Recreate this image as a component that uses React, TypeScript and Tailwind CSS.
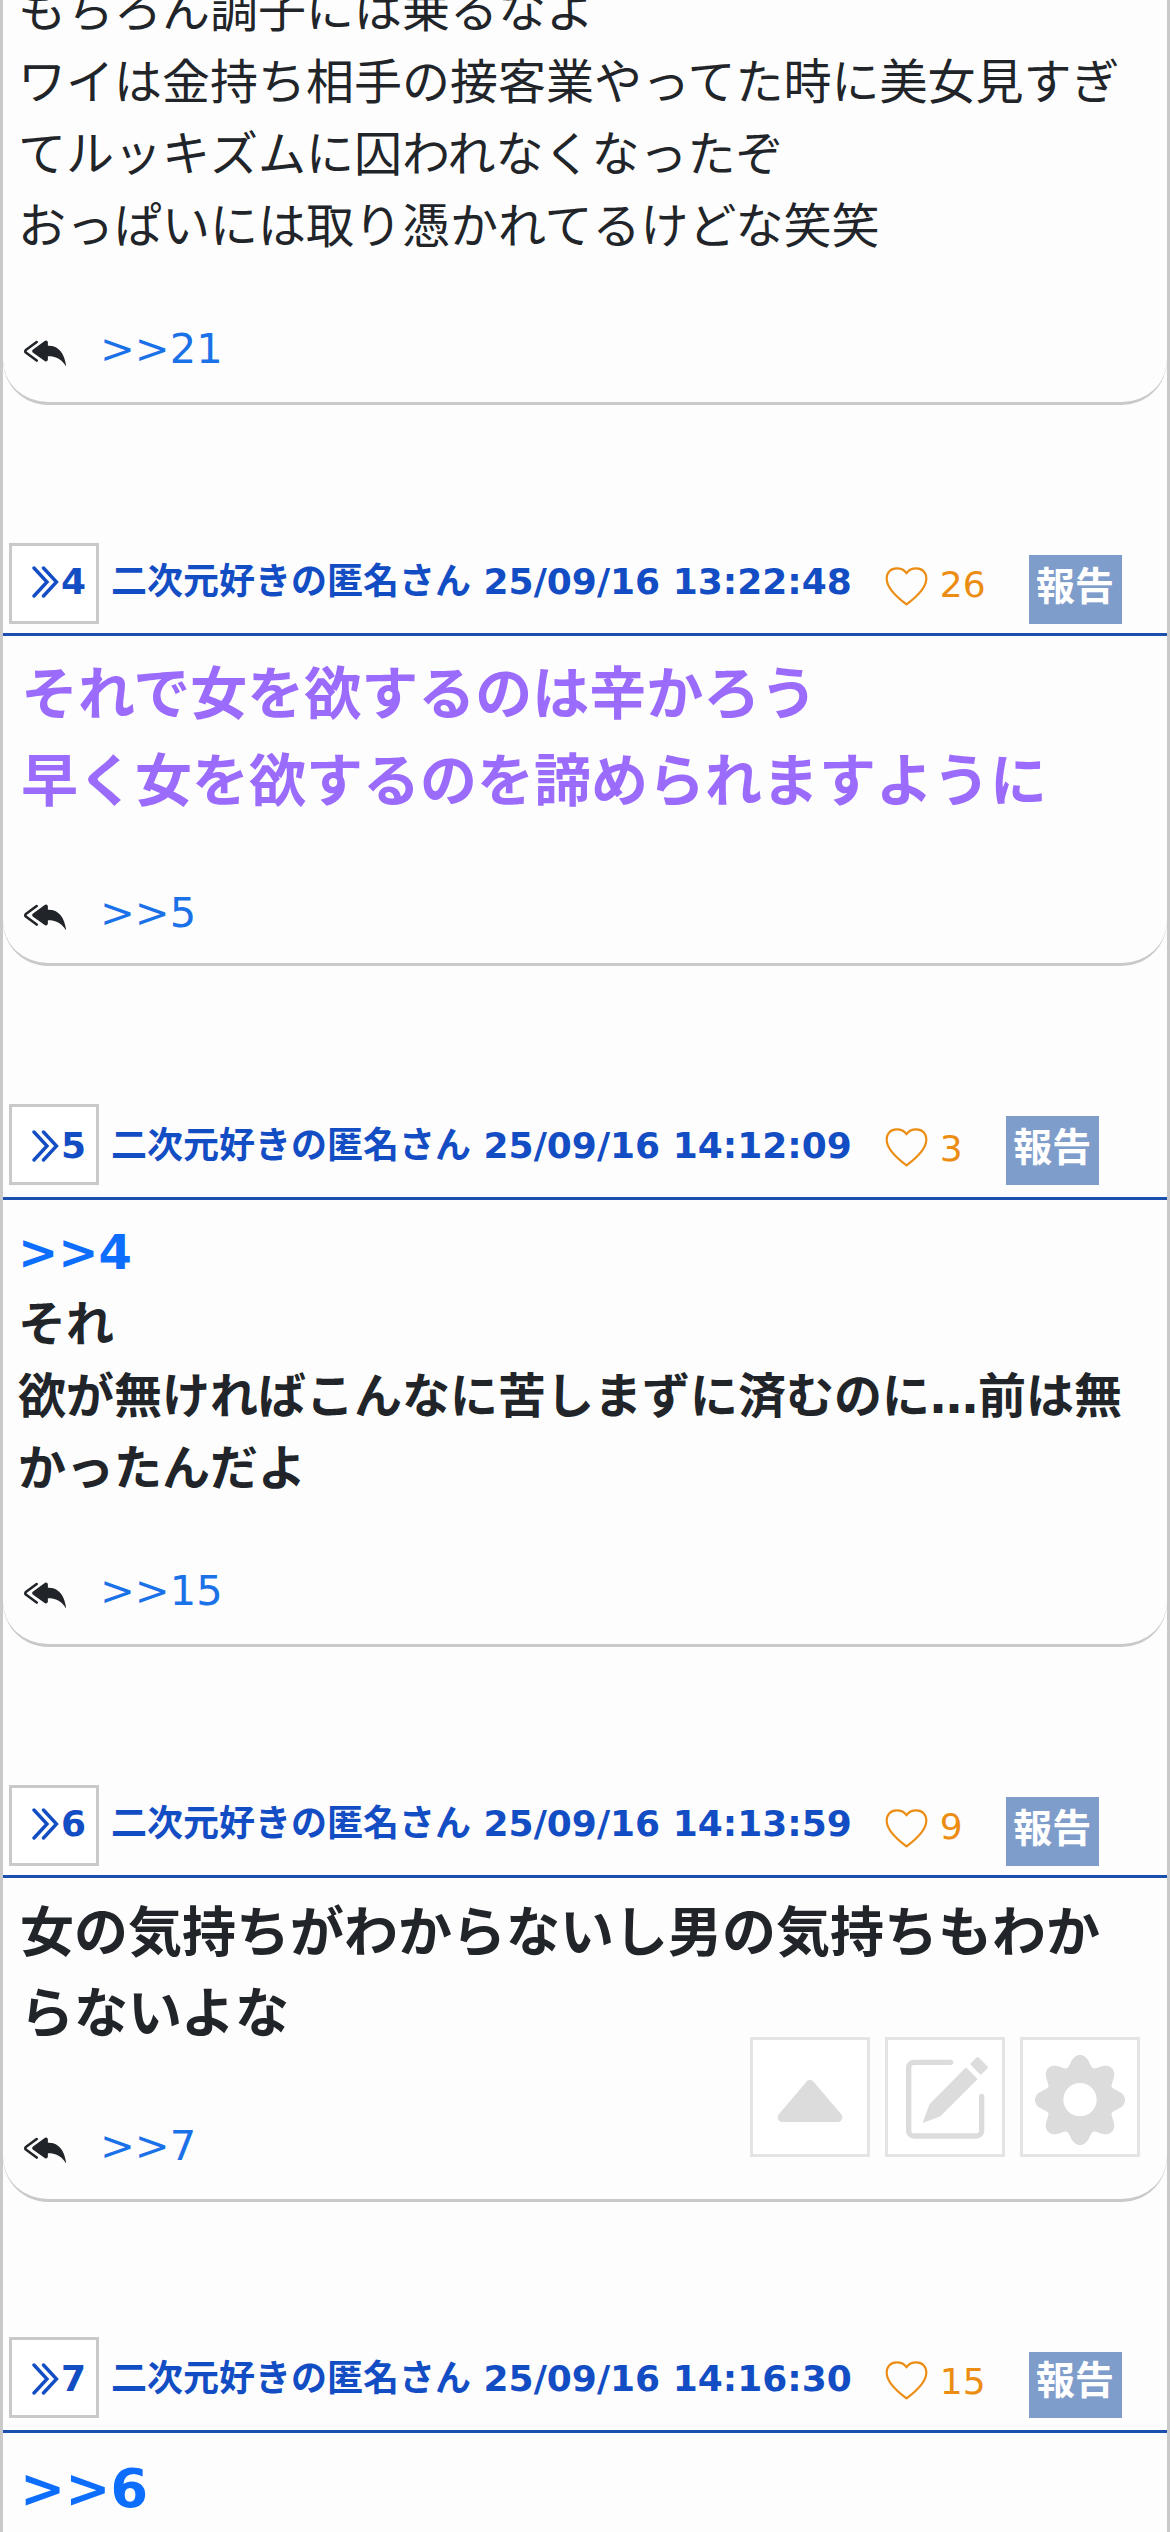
import type { ReactNode } from "react";
import { BsReplyAllFill } from "react-icons/bs";

type Post = {
  no: number;
  time: string;
  likes: number;
  headClass: string;
  badgeClass: string;
  bodyClass: string;
  textClass: string;
  replyClass: string;
  reply: string;
  text: ReactNode;
};

const posts: Post[] = [
  {
    no: 4,
    time: "25/09/16 13:22:48",
    likes: 26,
    headClass: "h-[231px] pb-[9px]",
    badgeClass: "h-[69px]",
    bodyClass: "h-[330px]",
    textClass: "pt-[15px] pl-[18px] text-[57px] leading-[87px] font-bold text-[#9b6bfb]",
    replyClass: "pb-[19px]",
    reply: ">>5",
    text: (
      <>
        それで女を欲するのは辛かろう
        <br />
        早く女を欲するのを諦められますように
      </>
    ),
  },
  {
    no: 5,
    time: "25/09/16 14:12:09",
    likes: 3,
    headClass: "h-[234px] pb-[12px]",
    badgeClass: "h-[69px]",
    bodyClass: "h-[447px]",
    textClass: "pt-[16px] pl-[15px] text-[48px] leading-[72px] font-bold",
    replyClass: "pb-[22px]",
    reply: ">>15",
    text: (
      <>
        <a className="text-[#0d6efd]">{">>4"}</a>
        <br />
        それ
        <br />
        欲が無ければこんなに苦しまずに済むのに…前は無
        <br />
        かったんだよ
      </>
    ),
  },
  {
    no: 6,
    time: "25/09/16 14:13:59",
    likes: 9,
    headClass: "h-[231px] pb-[9px]",
    badgeClass: "h-[69px]",
    bodyClass: "h-[324px]",
    textClass: "pt-[15px] pl-[17px] text-[54px] leading-[81px] font-bold",
    replyClass: "pb-[22px]",
    reply: ">>7",
    text: (
      <>
        女の気持ちがわからないし男の気持ちもわか
        <br />
        らないよな
      </>
    ),
  },
  {
    no: 7,
    time: "25/09/16 14:16:30",
    likes: 15,
    headClass: "h-[231px] pb-[12px]",
    badgeClass: "h-[66px]",
    bodyClass: "h-[324px]",
    textClass: "pt-[15px] pl-[17px] text-[54px] leading-[81px] font-bold",
    replyClass: "pb-[22px]",
    reply: ">>8",
    text: <a className="text-[#0d6efd]">{">>6"}</a>,
  },
];

function Chevrons() {
  return (
    <svg viewBox="0 0 27 32" className="h-[32px] w-[27px]" fill="none" stroke="#134dc4" strokeWidth="3.4" strokeLinecap="round" strokeLinejoin="miter">
      <path d="M2 2 15 16 2 30M11.5 2 24.5 16 11.5 30" />
    </svg>
  );
}

function Heart({ className }: { className: string }) {
  return (
    <svg viewBox="0 0 134 124" className={`h-[41px] w-[45px] ${className}`} fill="none" stroke="#ec8d13" strokeWidth="6.5" strokeLinejoin="round">
      <path d="M67 22C60 11 48 7 37 7C19 7 7 20 7 38C7 66 34 92 67 116C100 92 127 66 127 38C127 20 115 7 97 7C86 7 74 11 67 22Z" />
    </svg>
  );
}

function PostHead({ post }: { post: Post }) {
  const low = post.headClass.includes("pb-[9px]");
  return (
    <header className={`flex shrink-0 items-end border-b-3 border-[#1a4fad] ${post.headClass}`}>
      <div className="ml-[6px] flex h-[81px] w-[90px] items-end border-3 border-[#c9c9c9] bg-white pl-[20px] text-[36px] leading-[54px] font-bold text-[#134dc4]">
        <span className={`flex items-center ${low ? "pb-[12px]" : "pb-[9px]"}`}>
          <Chevrons />
          <span className="ml-[2px]">{post.no}</span>
        </span>
      </div>
      <span className={`ml-[12px] text-[36px] leading-[54px] font-bold whitespace-nowrap text-[#134dc4] ${low ? "pb-[15px]" : "pb-[12px]"}`}>
        二次元好きの匿名さん {post.time}
      </span>
      <Heart className="mb-[17px] ml-[32px]" />
      <span className={`ml-[11px] text-[36px] leading-[54px] text-[#ec8d13] ${low ? "pb-[12px]" : "pb-[9px]"}`}>
        {post.likes}
      </span>
      <span className={`ml-[43px] flex w-[93px] items-end justify-center bg-[#7f9dcb] pb-[10px] text-[39px] leading-[54px] font-bold text-white ${post.badgeClass}`}>
        報告
      </span>
    </header>
  );
}

function ReplyRow({ label, className }: { label: string; className: string }) {
  return (
    <footer className={`mt-auto flex items-center pl-[21px] text-[41.6px] leading-[62px] ${className}`}>
      <BsReplyAllFill className="mt-[3px] size-[42px]" />
      <a className="ml-[34px] text-[#1a71e8]">{label}</a>
    </footer>
  );
}

const cardClass = "flex shrink-0 flex-col rounded-b-[45px] border-b-3 border-[#c9c9c9]";

// Outline of an eight-lobed gear with a round hole.
const gearOutline =
  "M" +
  Array.from({ length: 240 }, (_, i) => {
    const a = (i / 240) * Math.PI * 2;
    const r = 120.7 + 16 * Math.cos(8 * a) - 1.7 * Math.cos(16 * a);
    return `${(180 + r * Math.sin(a)).toFixed(1)} ${(189 - r * Math.cos(a)).toFixed(1)}`;
  }).join("L") +
  "ZM180 138a50 50 0 1 0 0 100a50 50 0 1 0 0-100Z";

function FloatButton({ children }: { children: ReactNode }) {
  return (
    <button className="size-[120px] border-3 border-[#e4e4e4] bg-white">
      <svg viewBox="9 9 342 342" className="size-full" fill="#dcdcdc" stroke="#dcdcdc" strokeWidth="0" strokeLinejoin="round" strokeLinecap="round">
        {children}
      </svg>
    </button>
  );
}

export default function App() {
  return (
    <main className="relative flex h-[2532px] w-[1170px] flex-col overflow-hidden border-x-3 border-[#c9c9c9] bg-[#fdfdfd] font-['DejaVu_Sans','Noto_Sans_CJK_JP',sans-serif] text-[#212529]">
      <article className={`h-[405px] ${cardClass}`}>
        <p className="mt-[-26px] pl-[15px] text-[48px] leading-[72px] whitespace-nowrap">
          もちろん調子には乗るなよ
          <br />
          ワイは金持ち相手の接客業やってた時に美女見すぎ
          <br />
          てルッキズムに囚われなくなったぞ
          <br />
          おっぱいには取り憑かれてるけどな笑笑
        </p>
        <ReplyRow label=">>21" className="pb-[22px]" />
      </article>

      {posts.map((post) => (
        <article key={post.no} className="flex shrink-0 flex-col">
          <PostHead post={post} />
          <div className={`${cardClass} ${post.bodyClass}`}>
            <p className={`whitespace-nowrap ${post.textClass}`}>{post.text}</p>
            <ReplyRow label={post.reply} className={post.replyClass} />
          </div>
        </article>
      ))}

      <nav className="absolute top-[2037px] right-[27px] flex gap-[15px]">
        <FloatButton>
          <path d="M180 143 97 241H263Z" strokeWidth="28" />
        </FloatButton>
        <FloatButton>
          <path d="M197 76H87a16 16 0 0 0-16 16V281a16 16 0 0 0 16 16H274a16 16 0 0 0 16-16V178" fill="none" strokeWidth="16" />
          <path d="M243 94 275 126 164 237 116 255 135 203Z" strokeWidth="4" />
          <path d="M278 65 304 91 287 108 261 81Z" strokeWidth="9" />
        </FloatButton>
        <FloatButton>
          <path d={gearOutline} fillRule="evenodd" />
        </FloatButton>
      </nav>
    </main>
  );
}
